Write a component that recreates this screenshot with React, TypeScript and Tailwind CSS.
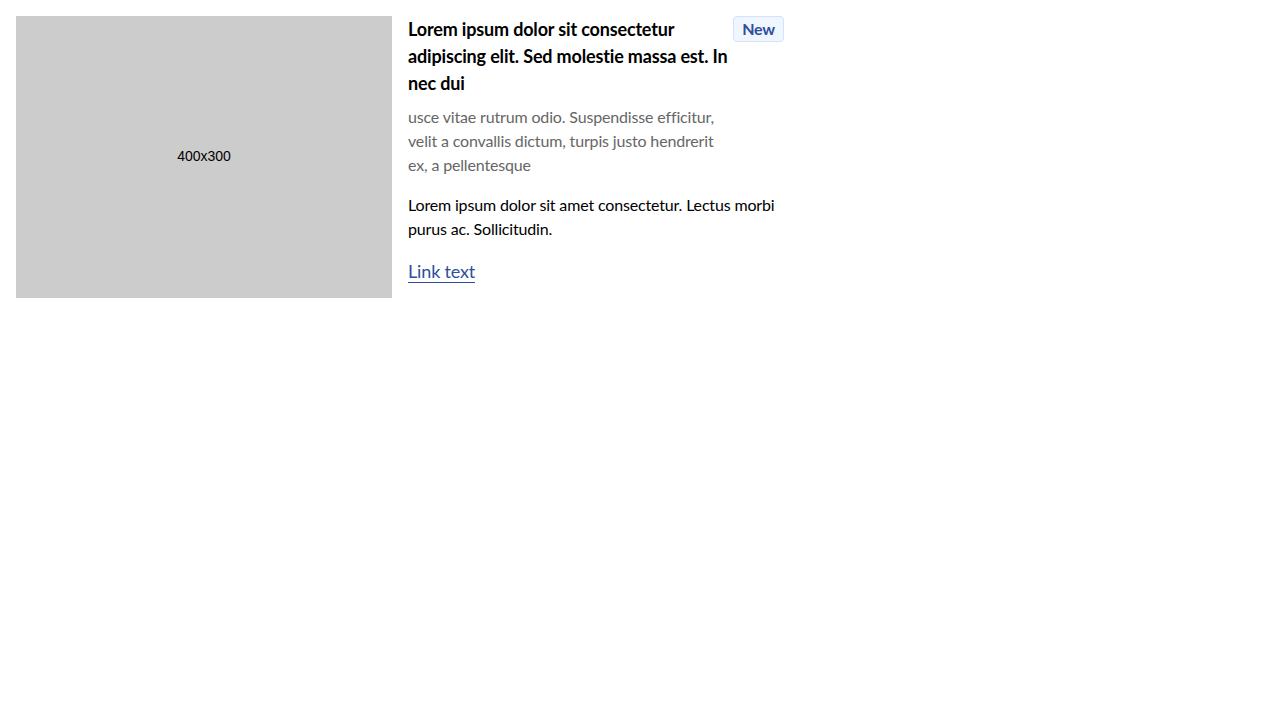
import React from 'react';

const App = () => {
  return (
    <div className="min-h-screen bg-white p-4 font-['Lato',sans-serif] tracking-[-0.01em] [font-variant-ligatures:none]">
      <div className="grid grid-cols-2 gap-4 w-[768px]">
        {/* Placeholder image */}
        <div className="bg-[#cccccc] aspect-[4/3] flex items-center justify-center">
          <span className="font-['Liberation_Sans',Arial,sans-serif] tracking-normal text-sm leading-none text-black mb-[2px]">400x300</span>
        </div>

        {/* Content */}
        <div className="flex flex-col">
          <div className="flex items-start justify-between">
            <h2 className="flex-1 text-lg leading-[27px] font-bold text-black">
              Lorem ipsum dolor sit consectetur adipiscing elit. Sed molestie massa est. In nec dui
            </h2>
            <span className="shrink-0 bg-[#f0f6ff] border border-[#d3e3fa] rounded-sm px-2 h-[26px] flex items-center text-base font-bold text-[#2d4f9a]">
              New
            </span>
          </div>
          <p className="mt-2 text-base leading-6 text-[#666666] w-[320px]">
            usce vitae rutrum odio. Suspendisse efficitur, velit a convallis dictum, turpis justo hendrerit ex, a pellentesque
          </p>
          <p className="mt-4 text-base leading-6 text-black">
            Lorem ipsum dolor sit amet consectetur. Lectus morbi purus ac. Sollicitudin.
          </p>
          <div className="mt-[19px]">
            <a href="#" className="text-lg leading-[21px] text-[#2d4f9a] border-b border-[#2d4f9a] inline-block">
              Link text
            </a>
          </div>
        </div>
      </div>
    </div>
  );
};

export default App;
